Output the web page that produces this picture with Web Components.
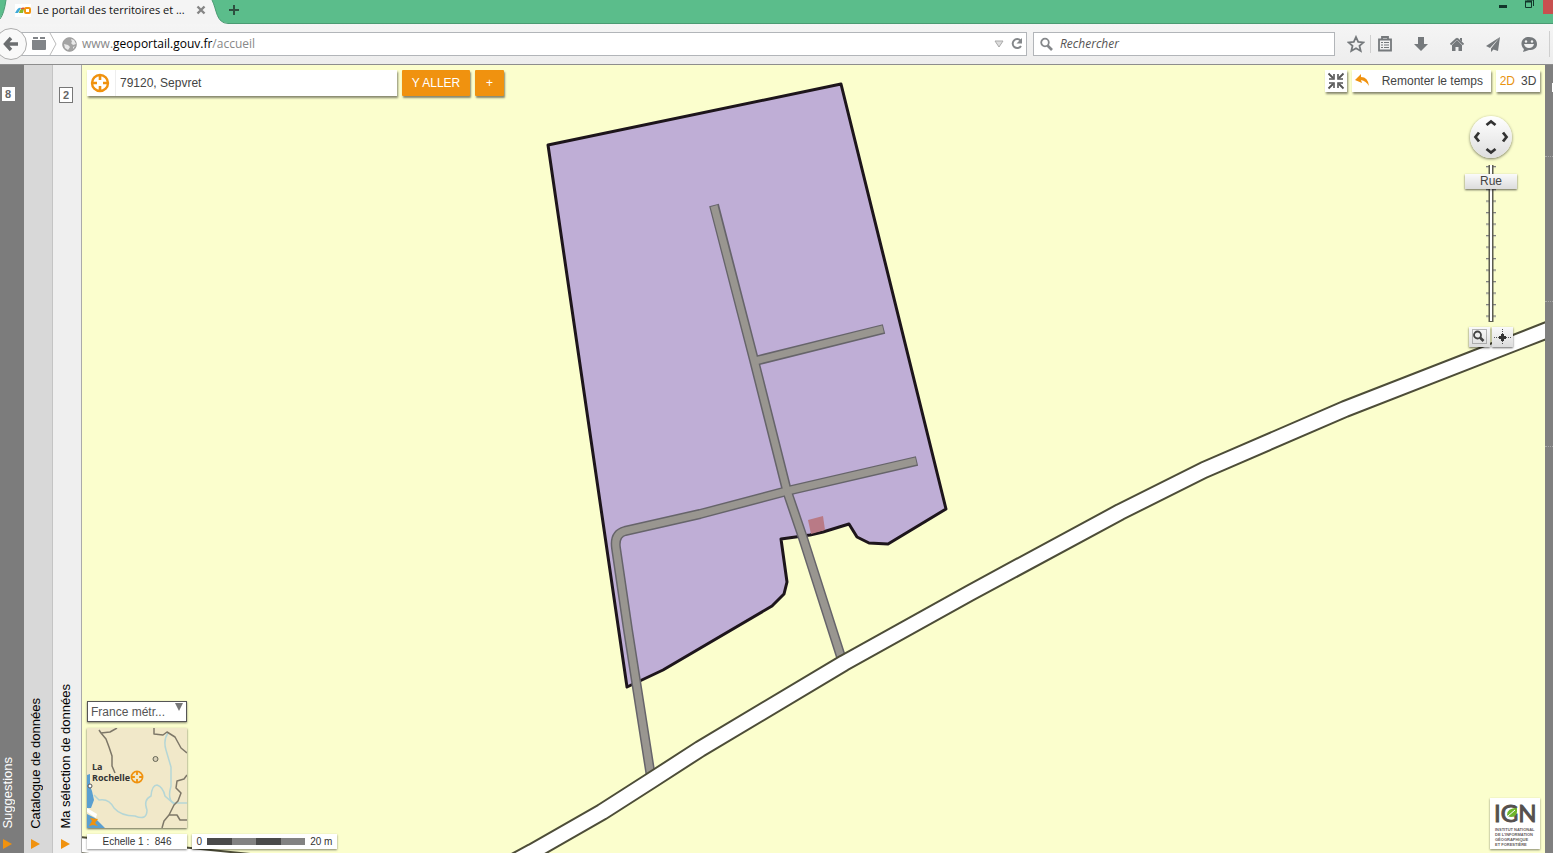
<!DOCTYPE html>
<html lang="fr">
<head>
<meta charset="utf-8">
<title>Le portail des territoires et des citoyens - Géoportail</title>
<style>
html, body { margin: 0; height: 100%; }
body { font-family: "Liberation Sans", Arial, sans-serif; font-size: 12px; color: #444; overflow: hidden; }
</style>
</head>
<body>
<gp-app></gp-app>
<script>
const define = (name, html, setup) => {
  const template = document.createElement('template');
  template.innerHTML = html;
  customElements.define(name, class extends HTMLElement {
    constructor() {
      super();
      this.attachShadow({ mode: 'open' }).append(template.content.cloneNode(true));
    }
    connectedCallback() { if (setup) setup(this, this.shadowRoot); }
  });
};

const target = `<g fill="none" stroke="#f0920f"><circle cx="10" cy="10" r="8" stroke-width="2.4"/><path stroke-width="2.6" d="M10 2v5M10 13v5M2 10h5M13 10h5"/></g>`;

define('gp-tabs', `
<style>
:host { display: flex; height: 24px; background: #5bbd8b; box-shadow: inset 0 -1px #4b9b73; font: 12px/20px "Open Sans", "Noto Sans", sans-serif; }
.tab { position: relative; display: flex; align-items: flex-start; width: 228px; height: 24px; color: #111; }
.shape { position: absolute; inset: 0; }
.fav { position: relative; margin: 4px 6px 0 15px; flex: none; }
.title { position: relative; flex: none; width: 158px; white-space: nowrap; font-size: 11px; }
button { position: relative; border: 0; background: none; padding: 0; height: 20px; display: flex; align-items: center; }
.win { margin-left: auto; display: flex; align-items: flex-start; }
.win button { height: 14px; }
.min, .max { width: 26px; justify-content: center; }
.win .close { width: 10px; background: #c8504f; }
</style>
<div class="tab">
<svg class="shape" width="228" height="24"><path d="M0 24V18Q4 14 6 0H212C217 10 216 23 228 23V24Z" fill="#f4f4f4"/><path d="M0 19Q4 14 6 0M212 0C217 10 216 23 228 23.500" fill="none" stroke="#4b9b73"/></svg>
<svg class="fav" width="16" height="13"><rect width="16" height="13" fill="#fff"/><path d="M0 9Q3 3 6 4L3 9Z" fill="#3fa9d8"/><path d="M4 9Q5 4 9 5L8 9Z" fill="#8cb92c"/><path d="M6 5Q9 3 10 6" fill="none" stroke="#e8502f" stroke-width="1.500"/><rect x="10" y="4" width="5" height="5" rx="1" fill="none" stroke="#f3950f" stroke-width="2"/></svg>
<span class="title">Le portail des territoires et ...</span>
<button aria-label="Fermer l'onglet"><svg width="12" height="12"><path d="M2.500 2.500l7 7M9.500 2.500l-7 7" stroke="#858585" stroke-width="2.400"/></svg></button>
</div>
<button aria-label="Nouvel onglet"><svg width="12" height="12"><path d="M6 1v10M1 6h10" stroke="#2e5040" stroke-width="2"/></svg></button>
<div class="win">
<button class="min" aria-label="Réduire"><svg width="10" height="14"><path d="M0 6.500h8" stroke="#12352a" stroke-width="3"/></svg></button>
<button class="max" aria-label="Restaurer"><svg width="12" height="14"><path d="M1.500 1.500h6v6h-6zM3 0h6.500v6" fill="none" stroke="#12352a"/><path d="M1 1.500h7" stroke="#12352a" stroke-width="2"/></svg></button>
<button class="close" aria-label="Fermer"></button>
</div>`);

define('gp-toolbar', `
<style>
:host { display: flex; align-items: center; height: 40px; background: linear-gradient(#f5f5f5, #ededed); border-bottom: 1px solid #8d8d8d; font: 12px/22px "Open Sans", "Noto Sans", sans-serif; }
button { border: 0; padding: 0; background: none; display: flex; align-items: center; justify-content: center; }
.back { position: relative; z-index: 1; width: 32px; height: 32px; margin-left: -5px; flex: none; border: 1px solid #adadad; border-radius: 50%; background: #f9f9f9; }
.url { flex: 1; display: flex; align-items: center; height: 22px; margin-left: -6px; border: 1px solid #b2b5b9; background: #fff; padding-left: 9px; min-width: 0; }
.book { width: 16px; } .chev { margin: 0 4px 0 2px; } .globe { margin-right: 5px; }
.addr { flex: 1; color: #888; white-space: nowrap; } b { color: #000; font-weight: 400; }
.url button { width: 18px; }
form { display: flex; align-items: center; width: 300px; height: 22px; margin: 0 12px 0 6px; border: 1px solid #b2b5b9; background: #fff; }
form svg { margin: 0 6px 0 5px; flex: none; }
input { flex: 1; border: 0; outline: 0; padding: 0; background: none; font: italic 12px/20px "Open Sans", "Noto Sans", sans-serif; }
input::placeholder { color: #555; opacity: 1; }
.star { width: 18px; padding-right: 5px; box-sizing: content-box; border-right: 1px solid #cfcfcf; height: 18px; }
.icons { display: flex; gap: 16px; margin: 0 10px 0 4px; }
.icons button { width: 20px; height: 20px; }
.end { width: 3px; height: 26px; border-left: 1px solid #cfcfcf; }
svg { display: block; }
</style>
<button class="back" aria-label="Page précédente"><svg width="18" height="18"><path d="M3.500 9H16M9 3L3.500 9L9 15" fill="none" stroke="#6b6e70" stroke-width="3.400"/></svg></button>
<div class="url">
<svg class="book" width="16" height="14"><path d="M1 3h14v9q0 1-1 1H2q-1 0-1-1zM2 0h5v2H2zM9 0h5v2H9z" fill="#818488"/></svg>
<svg class="chev" width="9" height="22"><path d="M1 0L7 11L1 22" fill="none" stroke="#bbb"/></svg>
<svg class="globe" width="15" height="15"><circle cx="7.500" cy="7.500" r="6.800" fill="#a4a4a4" stroke="#9a9a9a"/><path d="M9 2l3 1 2 4-3 1-2-2 1-1zM2 7l4 1 2 2-2 3-3-2zM11 10l2-1-2 3z" fill="#e9e9e9"/></svg>
<span class="addr">www.<b>geoportail.gouv.fr</b>/accueil</span>
<button aria-label="Historique"><svg width="10" height="8"><path d="M1 1h8L5 7z" fill="#ddd" stroke="#aaa"/></svg></button>
<button aria-label="Actualiser"><svg width="14" height="14"><path d="M10.500 3.500A4.500 4.500 0 1 0 11 9" fill="none" stroke="#84878a" stroke-width="2"/><path d="M12 1v5.500H6.500z" fill="#84878a"/></svg></button>
</div>
<form role="search"><svg width="15" height="15"><circle cx="6" cy="5.500" r="3.800" fill="none" stroke="#85888b" stroke-width="1.800"/><path d="M8.500 8.500l4.500 4.500" stroke="#85888b" stroke-width="2.600"/></svg><input aria-label="Rechercher" placeholder="Rechercher"></form>
<button class="star" aria-label="Marquer cette page"><svg width="18" height="18"><path d="M9 2l2.200 4.800 5.300.6-4 3.500 1.200 5.100L9 13.300 4.300 16l1.200-5.100-4-3.500 5.300-.6z" fill="none" stroke="#75797c" stroke-width="1.800"/></svg></button>
<div class="icons">
<button aria-label="Marque-pages"><svg width="18" height="18"><path d="M3 4.500h12v11H3zM6 4V2h6v2" fill="none" stroke="#75797c" stroke-width="1.800"/><path d="M5 7.500h2M8 7.500h5M5 10h2M8 10h5M5 12.500h2M8 12.500h5" stroke="#75797c" stroke-width="1.200"/></svg></button>
<button aria-label="Téléchargements"><svg width="18" height="18"><path d="M6 2h6v7h4l-7 7-7-7h4z" fill="#75797c"/></svg></button>
<button aria-label="Accueil"><svg width="18" height="18"><path d="M9 3.500L2.500 9.500M9 3.500L15.500 9.500" stroke="#75797c" stroke-width="1.800"/><path d="M4 10l5-5 5 5v6h-3.500v-4h-3v4H4zM12 3h2v4l-2-2z" fill="#75797c"/></svg></button>
<button aria-label="Partager"><svg width="18" height="18"><path d="M16 2L2 11l4 2zM16 2L7 13.500V17l2.500-2.500L14 16z" fill="#75797c"/></svg></button>
<button aria-label="Discussion"><svg width="18" height="18"><path d="M9 2C14 2 17 5 17 9S14 15 9 15L3 17 4 14C0 11 0 2 9 2Z" fill="#75797c"/><circle cx="6" cy="6.500" r="1.200" fill="#f1f1f1"/><circle cx="12" cy="6.500" r="1.200" fill="#f1f1f1"/><path d="M4 9h10q-1 4-5 4t-5-4z" fill="#f1f1f1"/></svg></button>
</div>
<span class="end"></span>`);

define('gp-panel', `
<style>
:host { display: flex; flex-direction: column; align-items: center; flex: none; box-sizing: border-box; padding-bottom: 3px; }
.badge { box-sizing: border-box; min-width: 13px; margin-top: 22px; padding: 0 3px; background: #fff; color: #666; font: bold 11px/14px "Liberation Sans", Arial, sans-serif; text-align: center; border: var(--badge-border, 0); }
button { margin-top: auto; border: 0; padding: 0; background: none; color: inherit; display: flex; flex-direction: column; align-items: center; gap: 9px; font: 13px/16px "Liberation Sans", Arial, sans-serif; }
.label { writing-mode: vertical-rl; transform: rotate(180deg); white-space: nowrap; }
svg { display: block; }
</style>
<slot name="badge"></slot>
<button><span class="label"><slot></slot></span><svg width="10" height="12"><path d="M0 1L9 6L0 11z" fill="#f0920f"/></svg></button>`, (el, root) => {
  const count = el.getAttribute('count');
  if (count && !root.querySelector('.badge')) {
    const badge = document.createElement('span');
    badge.className = 'badge';
    badge.textContent = count;
    root.querySelector('slot[name=badge]').append(badge);
  }
});

define('gp-plan', `
<style>:host { display: block; } svg { display: block; width: 100%; height: 100%; }</style>
<svg viewBox="82 65 1463 788" preserveAspectRatio="xMinYMin slice" aria-hidden="true">
<rect x="82" y="65" width="3000" height="3000" fill="#fbfecd"/>
<path d="M548 145L841 84L946 509L888 544L869 543L857 537L849 524L823 532L810 535L781 539L787 582L784 594L772 606L663 670L627 687Z" fill="#bfaed6" stroke="#1d151b" stroke-width="3" stroke-linejoin="round"/>
<path d="M808 520L823 516L825 530L811 534Z" fill="#b97a86"/>
<g fill="none" stroke-linejoin="round">
<g stroke="#66646a" stroke-width="10"><path d="M714 205L754 360L787 491L803 538L842 660"/><path d="M755 361L884 329"/><path d="M917 461L787 491L700 514L625 531Q614 534 616 548L628 630L651 777"/></g>
<g stroke="#999690" stroke-width="7"><path d="M714 206L754 360L787 491L803 538L842 660"/><path d="M755 361L883 329"/><path d="M916 461L787 491L700 514L625 531Q614 534 616 548L628 630L651 777"/></g>
<g stroke="#4d4d38" stroke-width="18"><path d="M480 880L532 852L602 812L652 780L700 749L844 663L970 593L1120 512L1204 470L1345 409L1545 331L2200 76"/><path d="M70 844L180 855L260 863"/></g>
<g stroke="#fff" stroke-width="14"><path d="M480 880L532 852L602 812L652 780L700 749L844 663L970 593L1120 512L1204 470L1345 409L1545 331L2200 76"/><path d="M70 844L180 855L260 863"/></g>
</g>
</svg>`);

define('gp-search', `
<style>
:host { display: block; }
form { display: flex; gap: 5px; height: 26px; }
.box { display: flex; width: 310px; background: #fff; box-shadow: 1px 2px 2px #0007; }
.box svg { flex: none; padding: 3px 5px 3px 3px; width: 20px; height: 20px; border-right: 1px solid #eee; }
input { flex: 1; min-width: 0; border: 0; padding: 0 4px; background: none; outline: 0; font: 12px/26px "Liberation Sans", Arial, sans-serif; color: #444; }
button { border: 0; padding: 0; background: #f0920f; color: #fff; box-shadow: 1px 2px 2px #0007; font: 12px/26px "Liberation Sans", Arial, sans-serif; border-radius: 1px; }
.go { width: 68px; } .more { width: 29px; }
</style>
<form><div class="box"><svg viewBox="0 0 20 20">${target}</svg><input aria-label="Lieu" value="79120, Sepvret"></div><button class="go" type="button">Y ALLER</button><button class="more" type="button" aria-label="Plus">+</button></form>`);

define('gp-tools', `
<style>
:host { display: flex; gap: 5px; height: 22px; }
button { border: 0; padding: 0; background: none; color: #444; font: 12px/22px "Liberation Sans", Arial, sans-serif; }
.card { display: flex; align-items: center; background: #fff; box-shadow: 1px 2px 2px #0007; }
.full { width: 22px; justify-content: center; }
.time { width: 139px; justify-content: space-between; padding: 0 8px 0 3px; box-sizing: border-box; }
.dim { width: 44px; justify-content: center; gap: 6px; }
.on { color: #e8930f; }
</style>
<button class="card full" aria-label="Quitter le plein écran"><svg width="18" height="18"><path d="M1.500 1.500L6 6M16.500 1.500L12 6M1.500 16.500L6 12M16.500 16.500L12 12" stroke="#555" stroke-width="1.800"/><path d="M7 2v5H2M11 2v5h5M7 16v-5H2M11 16v-5h5" fill="none" stroke="#555" stroke-width="1.600"/></svg></button>
<button class="card time"><svg width="16" height="14"><path d="M0 6L6 0V3Q13 3 14 12Q11 7 6 6L7 9Z" fill="#f0920f"/></svg>Remonter le temps</button>
<div class="card dim"><button class="on">2D</button><button>3D</button></div>`);

define('gp-navigator', `
<style>
:host { display: flex; flex-direction: column; align-items: center; width: 52px; }
button { border: 0; padding: 0; display: flex; align-items: center; justify-content: center; }
.pan { display: grid; grid-template: repeat(3, 1fr) / repeat(3, 1fr); width: 42px; height: 42px; border-radius: 50%; background: linear-gradient(#fff, #dedede); box-shadow: 0 1px 3px #0008; }
.pan button { background: none; }
.n { grid-area: 1 / 2; } .w { grid-area: 2 / 1; } .e { grid-area: 2 / 3; } .s { grid-area: 3 / 2; }
.s svg { transform: rotate(180deg); } .w svg { transform: rotate(-90deg); } .e svg { transform: rotate(90deg); }
.zoom { position: relative; width: 52px; height: 158px; margin-top: 7px; }
.track { display: block; margin: 0 auto; }
.label { position: absolute; top: 9px; left: 0; width: 52px; background: linear-gradient(#fafafa, #dcdcdc); box-shadow: 0 1px 2px #0009; color: #444; font: 12px/15px "Liberation Sans", Arial, sans-serif; text-align: center; }
input { position: absolute; inset: 0; width: 52px; height: 158px; margin: 0; opacity: 0; writing-mode: vertical-lr; direction: rtl; }
.pair { display: flex; gap: 2px; margin-top: 4px; }
.pair button { width: 21px; height: 20px; background: linear-gradient(#fafafa, #dcdcdc); box-shadow: 0 1px 2px #0009; }
</style>
<div class="pan">
<button class="n" aria-label="Nord"><svg width="14" height="8"><path d="M2.500 6L7 2.500L11.500 6" fill="none" stroke="#333" stroke-width="2.800"/></svg></button>
<button class="w" aria-label="Ouest"><svg width="14" height="8"><path d="M2.500 6L7 2.500L11.500 6" fill="none" stroke="#333" stroke-width="2.800"/></svg></button>
<button class="e" aria-label="Est"><svg width="14" height="8"><path d="M2.500 6L7 2.500L11.500 6" fill="none" stroke="#333" stroke-width="2.800"/></svg></button>
<button class="s" aria-label="Sud"><svg width="14" height="8"><path d="M2.500 6L7 2.500L11.500 6" fill="none" stroke="#333" stroke-width="2.800"/></svg></button>
</div>
<div class="zoom">
<svg class="track" width="12" height="158"><defs><pattern id="t" width="12" height="11.500" patternUnits="userSpaceOnUse"><path d="M1 1.500h10" stroke="#777"/><path d="M1 2.500h10" stroke="#aaa8"/></pattern></defs><rect width="12" height="157" fill="url(#t)"/><path d="M6 0v157" stroke="#5c5c50" stroke-width="5"/><path d="M6 0v156" stroke="#fff" stroke-width="2"/></svg>
<label class="label" for="level">Rue</label>
<input id="level" type="range" min="0" max="13" value="12">
</div>
<div class="pair">
<button aria-label="Zoom sur une zone"><svg width="17" height="16"><rect x="1.500" y=".5" width="14" height="14" fill="none" stroke="#777" stroke-dasharray="1 1"/><circle cx="6.500" cy="6" r="3.500" fill="#eee" stroke="#444" stroke-width="1.800"/><path d="M9 8.500L12.500 12" stroke="#444" stroke-width="2.600"/></svg></button>
<button aria-label="Centrer la carte"><svg width="17" height="16"><path d="M8.500 0v16M0 8.500h17" stroke="#555" stroke-dasharray="1 1"/><path d="M7 5h3v2h2v3h-2v2H7v-2H5V7h2z" fill="#333"/></svg></button>
</div>`);

define('gp-overview', `
<style>
:host { display: flex; flex-direction: column; gap: 6px; width: 100px; }
.territory { position: relative; }
select { display: block; appearance: none; width: 100px; height: 21px; box-sizing: border-box; border: 1px solid #555; border-radius: 0; padding: 0 0 0 3px; background: #fff; color: #555; box-shadow: 0 1px 2px #0007; font: 12px/18px "Liberation Sans", Arial, sans-serif; }
.territory svg { position: absolute; right: 3px; top: 2px; pointer-events: none; }
.mini { display: block; box-shadow: 0 1px 2px #0009; }
text { font: bold 9px "Open Sans", "Noto Sans", sans-serif; fill: #333; }
</style>
<div class="territory"><select aria-label="Territoire"><option>France métr...</option></select><svg width="10" height="9"><path d="M1 0h8L5 8z" fill="#777"/></svg></div>
<svg class="mini" width="100" height="100" role="img" aria-label="Carte de situation">
<rect width="100" height="100" fill="#f1e8c9"/>
<path d="M0 47L3 46V58L5 63L7 72L4 80L0 80ZM0 86L8 90L18 100H0Z" fill="#5a9fd0"/>
<path d="M0 80L10 86L9 90L0 84Z" fill="#fff"/>
<g fill="none" stroke="#b5d6d6" stroke-width="1.500"><path d="M81 5Q76 12 79 22L84 39V58Q80 72 87 75H100"/><path d="M7 67L12 72Q22 70 27 80Q34 88 48 88Q60 93 60 82Q56 72 64 68Q65 57 70 57Q76 59 78 68L87 76"/></g>
<g fill="none" stroke="#7d7768" stroke-width="1.500" stroke-linejoin="round"><path d="M12 2L14 5L23 4L30 0M14 5L19 11L22 19L25 28V38L28 45"/><path d="M67 0V6L76 7L80 4L88 9L94 20L100 25"/><path d="M100 47L97 51L90 53L89 60L94 65L91 73L87 77L82 87L77 93L75 100M82 87L90 87L93 92H100"/></g>
<circle cx="68.500" cy="31" r="2.500" fill="#d8d0b8" stroke="#665"/><circle cx="3" cy="58" r="2" fill="#fff" stroke="#555"/>
<path d="M2 98L5 93L3 90L11 91L8 95L11 98L6 97Z" fill="#f0920f"/>
<text x="5" y="42">La</text><text x="5" y="53">Rochelle</text>
<g transform="translate(43 42) scale(.7)">${target}</g>
</svg>`);

define('gp-scale', `
<style>
:host { display: flex; gap: 5px; height: 15px; font: 10px/15px "Liberation Sans", Arial, sans-serif; color: #333; }
.card { display: flex; align-items: center; justify-content: center; background: #fff; box-shadow: 0 1px 2px #0007; white-space: pre; }
.ratio { width: 100px; } .rule { width: 145px; gap: 5px; }
.bar { display: grid; grid-template-columns: repeat(4, 1fr); width: 98px; height: 7px; }
.bar i { background: #4a4a4a; } .bar i:nth-child(even) { background: #828282; }
</style>
<div class="card ratio">Echelle 1 :  846</div>
<div class="card rule"><span>0</span><span class="bar"><i></i><i></i><i></i><i></i></span><span>20 m</span></div>`);

define('gp-ign', `
<style>
:host { display: block; width: 50px; height: 51px; background: #fff; box-shadow: 0 1px 2px #0007; }
svg { display: block; }
.big { font: 24px Lato, "Open Sans", sans-serif; fill: #55504e; stroke: #55504e; }
.small { font: bold 4px "Liberation Sans", Arial, sans-serif; fill: #66605e; }
</style>
<svg width="50" height="51" role="img" aria-label="IGN">
<text class="big" x="4" y="24">IGN</text><path d="M17 17Q17 10 27 10Q28 19 21 19Q18 19 17 17Z" fill="#6fb52c"/><path d="M18 18L25 12" stroke="#fff"/>
<g class="small"><text x="5" y="33">INSTITUT NATIONAL</text><text x="5" y="38">DE L'INFORMATION</text><text x="5" y="43">GÉOGRAPHIQUE</text><text x="5" y="48">ET FORESTIÈRE</text></g>
</svg>`);

define('gp-rail', `
<style>
:host { display: block; width: 8px; flex: none; background: #808080; }
div { height: 144px; border-bottom: 1px dotted #a5a5a5; }
.first { height: 91px; }
</style>
<div class="first"><svg width="8" height="30" aria-hidden="true"><rect x="7" y="18" width="1" height="9" fill="#fff"/></svg></div><div></div><div></div>`);

define('gp-map', `
<style>
:host { display: block; position: relative; flex: 1; min-width: 0; overflow: hidden; }
gp-plan { position: absolute; inset: 0; }
.over { position: absolute; inset: 0; display: flex; flex-direction: column; padding: 5px 5px 4px; }
.top, .bottom { display: flex; justify-content: space-between; }
.bottom { margin-top: auto; align-items: flex-end; }
.left { display: flex; flex-direction: column; gap: 6px; }
gp-navigator { align-self: flex-end; margin: 20px 23px 0 0; }
</style>
<gp-plan></gp-plan>
<div class="over">
<div class="top"><gp-search></gp-search><gp-tools></gp-tools></div>
<gp-navigator></gp-navigator>
<div class="bottom"><div class="left"><gp-overview></gp-overview><gp-scale></gp-scale></div><gp-ign></gp-ign></div>
</div>`);

define('gp-app', `
<style>
:host { display: flex; flex-direction: column; height: 100vh; }
main { flex: 1; display: flex; min-height: 0; }
.sug { width: 24px; padding-right: 8px; background: #7c7c7c; color: #fff; }
.cat { width: 28px; padding-right: 4px; background: #d8d8d8; color: #000; }
.sel { width: 30px; padding-right: 2px; background: #efefef; color: #000; border-left: 1px solid #c4c4c4; border-right: 1px solid #aaa; --badge-border: 1px solid #777; }
</style>
<gp-tabs></gp-tabs>
<gp-toolbar></gp-toolbar>
<main>
<gp-panel class="sug" count="8">Suggestions</gp-panel>
<gp-panel class="cat">Catalogue de données</gp-panel>
<gp-panel class="sel" count="2">Ma sélection de données</gp-panel>
<gp-map></gp-map>
<gp-rail></gp-rail>
</main>`);
</script>
</body>
</html>
